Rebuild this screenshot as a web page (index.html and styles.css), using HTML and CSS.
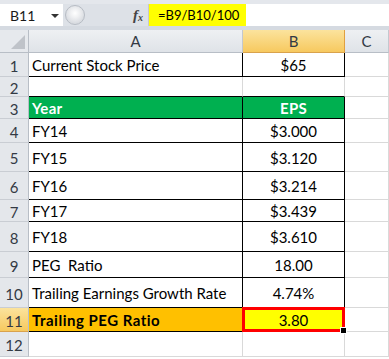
FILE: index.html
```html
<!DOCTYPE html>
<html lang="en">
<head>
    <meta charset="UTF-8">
    <title>PEG Ratio</title>
    <link rel="stylesheet" href="styles.css">
</head>
<body>
    <!--    formula bar     -->
    <div class="bar">
        <div class="name_box">
            <span class="cell_ref">B11</span>
            <span class="drop"></span>
        </div>
        <div class="splitter">
            <span class="knob"></span>
        </div>
        <div class="fx_area"><span class="fx">f<sub>x</sub></span></div>
        <div class="formula">=B9/B10/100</div>
        <div class="rest"></div>
    </div>

    <!--    sheet grid     -->
    <div class="sheet">
        <div class="corner"><span class="tri"></span></div>
        <div class="col_head">A</div>
        <div class="col_head sel_head">B</div>
        <div class="col_head">C</div>

        <div class="row_head">1</div>
        <div class="cell txt blk">Current Stock Price</div>
        <div class="cell num blk">$65</div>
        <div class="cell"></div>

        <div class="row_head">2</div>
        <div class="cell under"></div>
        <div class="cell under"></div>
        <div class="cell"></div>

        <div class="row_head">3</div>
        <div class="cell txt blk green">Year</div>
        <div class="cell num blk green">EPS</div>
        <div class="cell"></div>

        <div class="row_head">4</div>
        <div class="cell txt blk">FY14</div>
        <div class="cell num blk">$3.000</div>
        <div class="cell"></div>

        <div class="row_head">5</div>
        <div class="cell txt blk">FY15</div>
        <div class="cell num blk">$3.120</div>
        <div class="cell"></div>

        <div class="row_head">6</div>
        <div class="cell txt blk">FY16</div>
        <div class="cell num blk">$3.214</div>
        <div class="cell"></div>

        <div class="row_head">7</div>
        <div class="cell txt blk">FY17</div>
        <div class="cell num blk">$3.439</div>
        <div class="cell"></div>

        <div class="row_head">8</div>
        <div class="cell txt blk">FY18</div>
        <div class="cell num blk">$3.610</div>
        <div class="cell"></div>

        <div class="row_head">9</div>
        <div class="cell txt blk">PEG&nbsp; Ratio</div>
        <div class="cell num blk">18.00</div>
        <div class="cell"></div>

        <div class="row_head">10</div>
        <div class="cell txt blk">Trailing Earnings Growth Rate</div>
        <div class="cell num blk">4.74%</div>
        <div class="cell"></div>

        <div class="row_head sel_row">11</div>
        <div class="cell txt blk orange">Trailing PEG Ratio</div>
        <div class="cell num blk yellow active">3.80</div>
        <div class="cell"></div>

        <div class="row_head">12</div>
        <div class="cell"></div>
        <div class="cell"></div>
        <div class="cell"></div>
    </div>
</body>
</html>
```

FILE: styles.css
```css
/*tag*/
body{
    margin: 0;
    background: #ffffff;
    font-family: Lato, "Open Sans", sans-serif;
    font-size: 15px;
    color: #000000;
}

/*formula bar*/
.bar{
    display: flex;
    height: 22px;
    padding-top: 4px;
    background: #e4e7ec;
    border-bottom: 4px solid #d5dae1;
}
.name_box{
    width: 63px;
    background: #ffffff;
    display: flex;
    align-items: center;
    position: relative;
    font-size: 14px;
}
.cell_ref{
    margin-left: 10px;
    color: #1a1a1a;
}
.drop{
    position: absolute;
    left: 51px;
    top: 10px;
    border-left: 4px solid transparent;
    border-right: 4px solid transparent;
    border-top: 4px solid #333333;
}
.splitter{
    width: 22px;
    background: #dde1e7;
    display: flex;
    align-items: center;
}
.knob{
    width: 18px;
    height: 18px;
    margin-left: 2px;
    border-radius: 50%;
    border: 1px solid #b7bcc4;
    background: radial-gradient(circle at 50% 40%, #ffffff 0, #f0f1f3 30%, #d9dce1 70%);
}
.fx_area{
    width: 62px;
    background: #dde1e7;
    display: flex;
    align-items: center;
    justify-content: flex-end;
    padding-right: 1px;
}
.fx{
    font-family: "Liberation Serif", serif;
    font-style: italic;
    font-weight: bold;
    font-size: 15px;
    color: #444444;
    margin-right: 4px;
}
.fx sub{
    font-size: 10px;
    vertical-align: -1px;
}
.formula{
    width: 98px;
    background: #ffff00;
    display: flex;
    align-items: center;
    padding-left: 9px;
    box-sizing: border-box;
    border-left: 1px solid #c9c9c9;
    font-size: 13px;
    white-space: nowrap;
}
.rest{
    flex: 1;
    background: #ffffff;
}

/*grid*/
.sheet{
    display: grid;
    grid-template-columns: 29px 214px 102px 1fr;
    grid-template-rows: 23px 24px 20px 22px 24px 29px 28px 22px 30px 26px 30px 24px 25px;
}
.corner{
    background: #e6e9ed;
    border-right: 1px solid #b8bec6;
    border-bottom: 1px solid #b8bec6;
    position: relative;
}
.tri{
    position: absolute;
    right: 3px;
    bottom: 3px;
    border-left: 14px solid transparent;
    border-bottom: 14px solid #bfc3c9;
}
.col_head{
    background: linear-gradient(#eef0f3, #dfe3e8);
    border-right: 1px solid #c3c8cf;
    border-bottom: 1px solid #b8bec6;
    display: flex;
    align-items: center;
    justify-content: center;
    color: #333a44;
}
.sel_head{
    background: linear-gradient(#fbe39d, #f7c95f);
    border-right: 1px solid #e0a040;
    border-bottom: 1px solid #d9a24c;
}
.row_head{
    background: #e4e7eb;
    border-right: 1px solid #b8bec6;
    border-bottom: 1px solid #c9cdd3;
    display: flex;
    align-items: center;
    justify-content: center;
    color: #333a44;
    padding-top: 2px;
    box-sizing: border-box;
}
.sel_row{
    background: linear-gradient(#fbe39d, #f7c95f);
    border-bottom: 1px solid #d9a24c;
}
.cell{
    border-right: 1px solid #d9d9d9;
    border-bottom: 1px solid #d9d9d9;
    display: flex;
    align-items: center;
    padding-top: 1px;
    box-sizing: border-box;
}
.txt{
    padding-left: 3px;
}
.num{
    justify-content: center;
}
.blk{
    border-right-color: #000000;
    border-bottom-color: #000000;
}
.under{
    border-bottom-color: #000000;
}
.green{
    background: #00b050;
    color: #ffffff;
    font-weight: bold;
    letter-spacing: 0.3px;
}
.orange{
    background: #ffc000;
    font-weight: bold;
    letter-spacing: 0.5px;
}
.yellow{
    background: #ffff00;
}
.active{
    position: relative;
}
.active::after{
    content: "";
    position: absolute;
    left: -1px;
    top: -1px;
    right: -1px;
    bottom: -1px;
    border: 3px solid #ff0000;
}
.active::before{
    content: "";
    position: absolute;
    right: -3px;
    bottom: -3px;
    width: 5px;
    height: 5px;
    background: #000000;
    border: 1px solid #ffffff;
    z-index: 1;
}
```
